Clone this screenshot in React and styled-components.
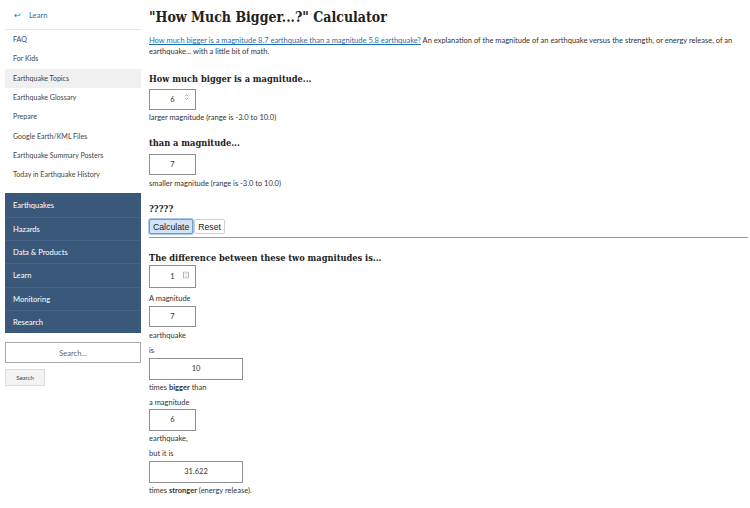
import React from "react";
import styled, { createGlobalStyle } from "styled-components";

const Global = createGlobalStyle`
  html, body { margin: 0; padding: 0; background: #fff; }
  body { font-family: "Lato", "Liberation Sans", sans-serif; color: #333; }
  * { box-sizing: border-box; }
`;

const Page = styled.div`
  display: flex;
  align-items: flex-start;
  width: 750px;
  height: 508px;
  overflow: hidden;
`;

const Sidebar = styled.aside`
  width: 136px;
  margin-left: 5px;
  flex: none;
  display: flex;
  flex-direction: column;
`;

const BackLink = styled.a`
  display: flex;
  align-items: center;
  gap: 8px;
  height: 30px;
  padding-left: 9px;
  padding-top: 1px;
  color: #2a6fa8;
  font-size: 7.6px;
  text-decoration: none;
  border-bottom: 1px solid #e4e4e4;
`;

const Arrow = styled.span`
  font-size: 8px;
`;

const SubList = styled.ul`
  list-style: none;
  margin: 0;
  padding: 0 0 9px 0;
`;

const SubItem = styled.li`
  height: 19.3px;
  display: flex;
  align-items: center;
  padding-left: 8px;
  font-size: 7.05px;
  color: #444;
  background: ${(p) => (p.$active ? "#f0f0f0" : "transparent")};
`;

const MainNav = styled.ul`
  list-style: none;
  margin: 0;
  padding: 0;
  background: #3a5879;
`;

const MainItem = styled.li`
  height: 23.3px;
  display: flex;
  align-items: center;
  padding-left: 8px;
  font-size: 7.6px;
  color: #fff;
  border-top: ${(p) => (p.$first ? "none" : "1px solid #46648a")};
`;

const SearchInput = styled.div`
  margin-top: 9px;
  height: 21px;
  border: 1px solid #aaa;
  display: flex;
  align-items: center;
  justify-content: center;
  font-size: 7.6px;
  color: #666;
`;

const SearchButton = styled.button`
  margin-top: 6px;
  width: 40px;
  height: 17px;
  border: 1px solid #ddd;
  background: #f3f3f3;
  font-family: "Lato", sans-serif;
  font-size: 6px;
  color: #444;
  padding: 0;
`;

const Main = styled.main`
  flex: 1;
  margin-left: 8px;
  padding-top: 6px;
  padding-right: 2px;
`;

const Title = styled.h1`
  margin: 0;
  font-family: "DejaVu Serif Condensed", "DejaVu Serif", serif;
  font-weight: bold;
  font-size: 14px;
  color: #222;
  line-height: 22px;
`;

const Intro = styled.p`
  margin: 7px 0 0 0;
  font-size: 7.5px;
  line-height: 11px;
  color: #333;
  padding-right: 6px;
`;

const IntroLink = styled.a`
  color: #1f6fa8;
  text-decoration: underline;
`;

const H2 = styled.h2`
  margin: ${(p) => p.$mt || "0"} 0 0 0;
  font-family: "DejaVu Serif Condensed", "DejaVu Serif", serif;
  font-weight: bold;
  font-size: 9.2px;
  color: #222;
  line-height: 10px;
`;

const FieldWrap = styled.div`
  position: relative;
  width: ${(p) => (p.$wide ? "94px" : "47px")};
  height: ${(p) => p.$h || "21px"};
  margin-top: ${(p) => p.$mt || "0px"};
`;

const Field = styled.input`
  width: 100%;
  height: 100%;
  border: 1px solid #8f8f8f;
  background: #fff;
  text-align: center;
  font-family: "Lato", sans-serif;
  font-size: 7.5px;
  color: #333;
  padding: 0;
  outline: none;
`;

const Spin = styled.svg`
  position: absolute;
  right: 7px;
  top: 50%;
  transform: translateY(-50%);
`;

const Label = styled.div`
  margin-top: ${(p) => p.$mt || "5px"};
  font-size: 7.5px;
  line-height: 8px;
  color: #333;
`;

const Buttons = styled.div`
  display: flex;
  gap: 1px;
  margin-top: 5px;
`;

const Btn = styled.button`
  height: 15px;
  padding: 0 3px;
  font-family: "Liberation Sans", Arial, sans-serif;
  font-size: 8.7px;
  color: #222;
  border: 1px solid ${(p) => (p.$primary ? "#6a9fd4" : "#cfcfcf")};
  background: ${(p) => (p.$primary ? "#d4e3f3" : "#fff")};
  border-radius: 2px;
  box-shadow: ${(p) => (p.$primary ? "0 0 0 1px #a9c7e8" : "none")};
`;

const Rule = styled.hr`
  border: none;
  border-top: 1px solid #9a9a9a;
  margin: 3px 0 0 0;
`;

const subs = [
  "FAQ",
  "For Kids",
  "Earthquake Topics",
  "Earthquake Glossary",
  "Prepare",
  "Google Earth/KML Files",
  "Earthquake Summary Posters",
  "Today in Earthquake History",
];
const mains = ["Earthquakes", "Hazards", "Data & Products", "Learn", "Monitoring", "Research"];

const UpDown = () => (
  <Spin width="5" height="7" viewBox="0 0 5 7">
    <path d="M1 2.6 L2.5 1 L4 2.6 M1 4.4 L2.5 6 L4 4.4" fill="none" stroke="#888" strokeWidth="0.7" />
  </Spin>
);

const BoxIcon = () => (
  <Spin width="6" height="7" viewBox="0 0 6 7">
    <rect x="0.5" y="0.5" width="5" height="6" fill="none" stroke="#999" strokeWidth="0.7" />
    <path d="M1.8 2.6 L3 1.6 L4.2 2.6 M1.8 4.4 L3 5.4 L4.2 4.4" fill="none" stroke="#aaa" strokeWidth="0.5" />
  </Spin>
);

export default function App() {
  return (
    <>
      <Global />
      <Page>
        <Sidebar>
          <BackLink href="#">
            <Arrow>↩</Arrow>
            Learn
          </BackLink>
          <SubList>
            {subs.map((s, i) => (
              <SubItem key={s} $active={i === 2}>{s}</SubItem>
            ))}
          </SubList>
          <MainNav>
            {mains.map((m, i) => (
              <MainItem key={m} $first={i === 0}>{m}</MainItem>
            ))}
          </MainNav>
          <SearchInput>Search...</SearchInput>
          <SearchButton>Search</SearchButton>
        </Sidebar>
        <Main>
          <Title>"How Much Bigger...?" Calculator</Title>
          <Intro>
            <IntroLink href="#">
              How much bigger is a magnitude 8.7 earthquake than a magnitude 5.8 earthquake?
            </IntroLink>{" "}
            An explanation of the magnitude of an earthquake versus the strength, or energy release, of an
            earthquake... with a little bit of math.
          </Intro>
          <H2 $mt="17px">How much bigger is a magnitude...</H2>
          <FieldWrap $mt="2px">
            <Field readOnly value="6" />
            <UpDown />
          </FieldWrap>
          <Label $mt="7px">larger magnitude (range is -3.0 to 10.0)</Label>
          <H2 $mt="16px">than a magnitude...</H2>
          <FieldWrap $mt="3px">
            <Field readOnly value="7" />
          </FieldWrap>
          <Label $mt="8px">smaller magnitude (range is -3.0 to 10.0)</Label>
          <H2 $mt="16px">?????</H2>
          <Buttons>
            <Btn $primary>Calculate</Btn>
            <Btn>Reset</Btn>
          </Buttons>
          <Rule />
          <H2 $mt="15px">The difference between these two magnitudes is...</H2>
          <FieldWrap $h="23px" $mt="0px">
            <Field readOnly value="1" />
            <BoxIcon />
          </FieldWrap>
          <Label $mt="9px">A magnitude</Label>
          <FieldWrap $mt="0px">
            <Field readOnly value="7" />
          </FieldWrap>
          <Label $mt="8px">earthquake</Label>
          <Label $mt="7px">is</Label>
          <FieldWrap $wide $h="22px" $mt="0px">
            <Field readOnly value="10" />
          </FieldWrap>
          <Label $mt="7px">
            times <b>bigger</b> than
          </Label>
          <Label $mt="7px">a magnitude</Label>
          <FieldWrap $h="22px" $mt="-1px">
            <Field readOnly value="6" />
          </FieldWrap>
          <Label $mt="7px">earthquake,</Label>
          <Label $mt="7px">but it is</Label>
          <FieldWrap $wide $h="22px" $mt="0px">
            <Field readOnly value="31.622" />
          </FieldWrap>
          <Label $mt="7px">
            times <b>stronger</b> (energy release).
          </Label>
        </Main>
      </Page>
    </>
  );
}
